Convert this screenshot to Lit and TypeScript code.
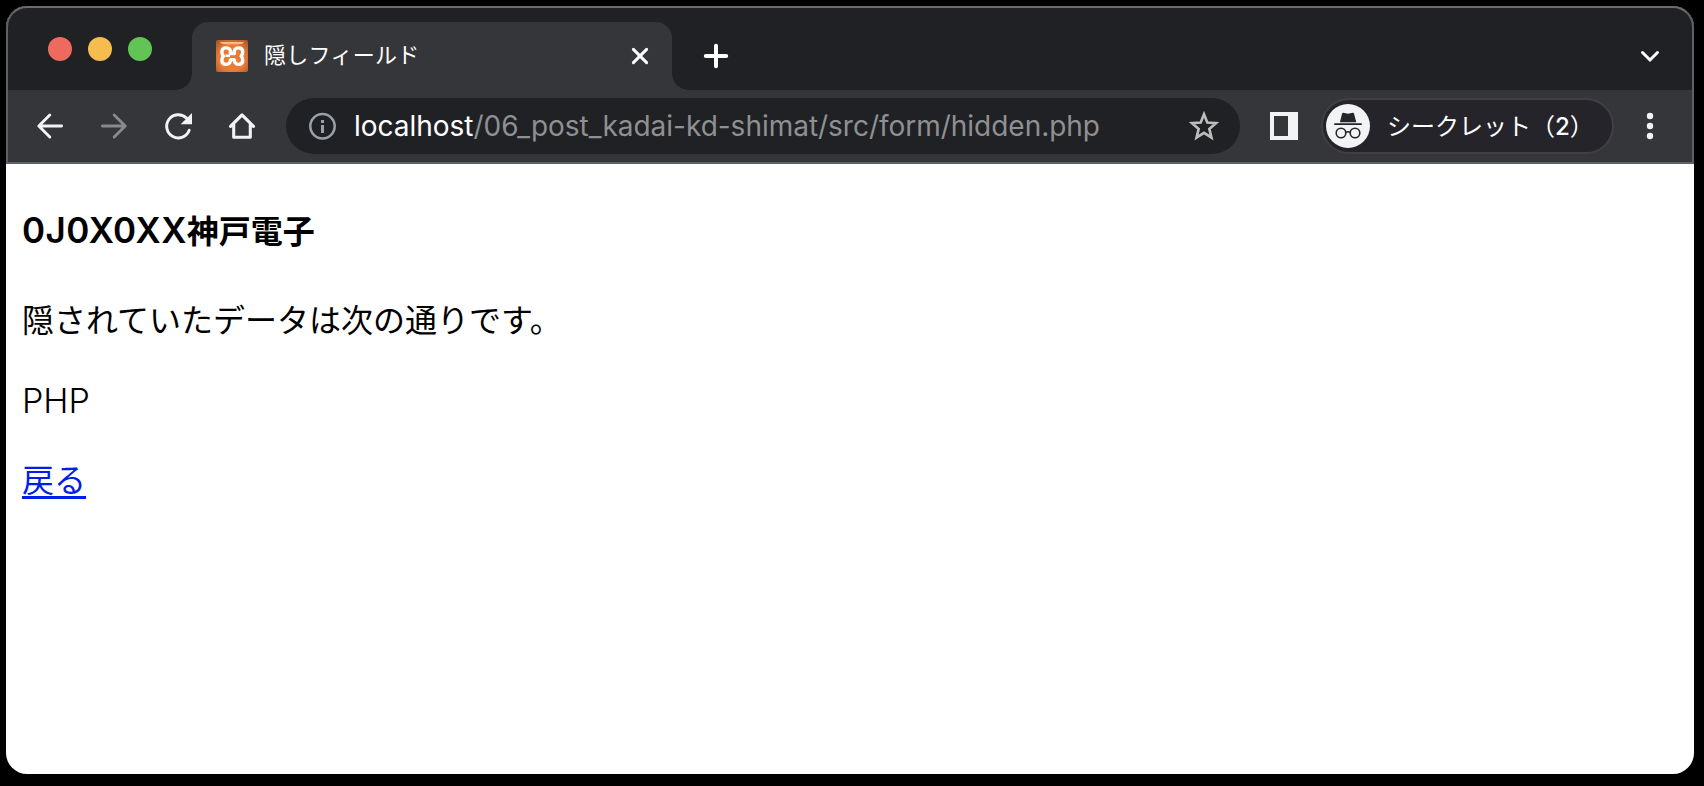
import { LitElement, html, css, svg } from "lit";
import { customElement } from "lit/decorators.js";

const icon = (body: unknown, size = 32) =>
  html`<svg class="icon" width=${size} height=${size} viewBox="0 0 ${size} ${size}" fill="none">${body}</svg>`;

const icons = {
  back: svg`<path d="M27.6 16H5.6M15.8 5 4.8 16l11 11" stroke="#f1f3f4" stroke-width="2.9" stroke-linecap="round" stroke-linejoin="round"/>`,
  forward: svg`<path d="M4.4 16h22M16.2 5l11 11-11 11" stroke="#88898b" stroke-width="2.9" stroke-linecap="round" stroke-linejoin="round"/>`,
  reload: svg`<path d="M27.2 20.2A11.6 11.6 0 1 1 24.3 7.9" stroke="#f1f3f4" stroke-width="2.9" stroke-linecap="round"/><path d="M30 3v11.3H18.7z" fill="#f1f3f4"/>`,
  home: svg`<path d="M4.5 16.3 16 4.8l11.5 11.5M7.7 14v13.3h16.6V14" stroke="#f1f3f4" stroke-width="3.1" stroke-linecap="round" stroke-linejoin="round"/>`,
  info: svg`<circle cx="16.5" cy="16.3" r="12.2" stroke="#9aa0a6" stroke-width="2.5"/><path d="M15 10h3v3h-3zM15 15h3v8h-3z" fill="#9aa0a6"/>`,
  star: svg`<path d="m16 4.2 3.3 8.4 8.7.6-6.7 5.7 2.2 8.7-7.5-4.8-7.5 4.8 2.2-8.7L4 13.2l8.7-.6z" stroke="#bdbdbe" stroke-width="2.6"/>`,
  panel: svg`<path d="M0 0h28v28H0z" fill="#f1f3f4"/><path d="M4 4h14v20H4z" fill="#35363a"/>`,
  close: svg`<path d="m9.4 9.4 13.2 13.2M22.6 9.4 9.4 22.6" stroke="#fff" stroke-width="3" stroke-linecap="round"/>`,
  plus: svg`<path d="M16 5.8v20.4M5.8 16h20.4" stroke="#fff" stroke-width="4" stroke-linecap="round"/>`,
  chevron: svg`<path d="m8.5 12.5 7.5 7.5 7.5-7.5" stroke="#fff" stroke-width="3" stroke-linecap="round"/>`,
  dots: svg`<g fill="#f1f3f4"><circle cx="16" cy="6" r="3.2"/><circle cx="16" cy="16" r="3.2"/><circle cx="16" cy="26" r="3.2"/></g>`,
  incognito: svg`<circle cx="22" cy="22" r="22" fill="#f1f3f4"/><path d="m17.3 8.7 4.7 1.1 4.7-1.1q.9-.2 1.3.8l2.3 8.7H13.9l2.2-8.7q.3-1 1.2-.8zM8.3 19.2h27.4v1.9H8.3z" fill="#25262a"/><g stroke="#25262a" stroke-width="1.6"><circle cx="15" cy="29" r="4.8"/><circle cx="29" cy="29" r="4.8"/><path d="M19.6 28.6q2.4-1.6 4.8 0"/></g>`,
  xampp: svg`<defs><radialGradient id="fav" cx="50%" cy="56%" r="70%"><stop offset=".6" stop-color="#e87b36"/><stop offset="1" stop-color="#a9572b"/></radialGradient></defs><rect width="32" height="32" rx="2" fill="url(#fav)"/><path d="M4 2h24q-1 2.2-6 2.2H10Q5 4.2 4 2z" fill="#f3b98f"/><path d="M14.4 13.6q.8-5.7-4.2-5.7-4.3 0-4.3 4 0 2.7 1.6 4.2-1.6 1.5-1.6 4.2 0 4.1 4.3 4.1 4.4 0 4.4-4.8h3.6q0 4.8 4.4 4.8 4.1 0 4.1-4.1 0-2.7-1.6-4.2 1.6-1.5 1.6-4.2 0-4-4.1-4-5 0-4.2 5.7z" stroke="#fff" stroke-width="3.4" stroke-linejoin="round"/><path d="M9.5 15.8h4.5" stroke="#fff" stroke-width="2.4"/>`,
};

@customElement("app-root")
export class AppRoot extends LitElement {
  static styles = css`
    :host {
      display: block;
      height: 786px;
      box-sizing: border-box;
      padding: 6px 10px 12px 6px;
      background: #000;
      overflow: hidden;
      font-family: Inter, "Noto Sans CJK JP", sans-serif;
    }
    .window {
      height: 768px;
      background: #fff;
      border-radius: 21px;
      overflow: hidden;
    }
    .chrome { position: relative; }
    .chrome::after {
      content: "";
      position: absolute;
      inset: 0;
      border: 2px solid #5f6063;
      border-top-color: #6b6c6e;
      border-radius: 21px 21px 0 0;
      pointer-events: none;
    }
    .icon { display: block; flex: none; }
    .strip {
      display: flex;
      height: 84px;
      background: #202124;
    }
    .lights {
      display: flex;
      gap: 16px;
      padding: 31px 0 0 42px;
      width: 144px;
    }
    .light { width: 24px; height: 24px; border-radius: 50%; }
    .red { background: #ee6a5f; }
    .yellow { background: #f5bd4f; }
    .green { background: #61c454; }
    .tab {
      position: relative;
      display: flex;
      box-sizing: border-box;
      width: 480px;
      height: 68px;
      margin-top: 16px;
      padding: 18px 16px 0 24px;
      background: #35363a;
      border-radius: 16px 16px 0 0;
    }
    .tab::before, .tab::after {
      content: "";
      position: absolute;
      bottom: 0;
      width: 16px;
      height: 16px;
    }
    .tab::before { left: -16px; background: radial-gradient(circle at 0 0, transparent 15.5px, #35363a 16px); }
    .tab::after { right: -16px; background: radial-gradient(circle at 100% 0, transparent 15.5px, #35363a 16px); }
    .title {
      flex: 1;
      margin-left: 16px;
      color: #fff;
      font-size: 22px;
      line-height: 31px;
      letter-spacing: 0.3px;
    }
    .new { margin: 34px auto 0 28px; }
    .more { margin: 34px 28px 0 0; }
    .toolbar {
      display: flex;
      align-items: center;
      box-sizing: border-box;
      height: 74px;
      padding: 0 28px 2px;
      background: #35363a;
    }
    .nav { display: flex; gap: 32px; }
    .address {
      display: flex;
      align-items: center;
      box-sizing: border-box;
      width: 954px;
      height: 56px;
      margin-left: 28px;
      padding: 0 20px;
      border-radius: 28px;
      background: #202124;
    }
    .url {
      flex: 1;
      margin-left: 16px;
      color: #8f9092;
      font-size: 28px;
      line-height: 57px;
      letter-spacing: -0.02px;
      white-space: nowrap;
    }
    .host { color: #fff; }
    .panel { margin: 0 23px 0 30px; }
    .profile {
      display: flex;
      align-items: center;
      box-sizing: border-box;
      width: 293px;
      height: 56px;
      padding-left: 3px;
      border: 2px solid #3f3f44;
      border-radius: 28px;
      background: #25242a;
      color: #fff;
    }
    .label {
      margin-left: 17px;
      font: 400 24px/50px "Noto Sans CJK JP", sans-serif;
      white-space: nowrap;
    }
    .count { font-family: Inter, sans-serif; font-weight: 500; }
    .menu { margin-left: auto; display: flex; }
    .page {
      padding: 43px 16px;
      color: #000;
      font-size: 32px;
      line-height: 48px;
    }
    .heading {
      margin: 0 0 42px;
      height: 48px;
      font-size: 35px;
      font-weight: 600;
      line-height: 46px;
      letter-spacing: 0.5px;
    }
    .heading .cjk { font-size: 32px; font-weight: 700; letter-spacing: 0; }
    .text { height: 48px; margin: 0 0 32px; }
    .latin { font-size: 34px; font-weight: 300; line-height: 48px; }
    .link {
      display: inline-block;
      box-sizing: border-box;
      height: 42px;
      color: #001ee8;
      text-decoration: none;
      border-bottom: 3px solid #001ee8;
    }
  `;

  render() {
    return html`
      <div class="window" lang="ja">
        <header class="chrome">
          <div class="strip">
            <div class="lights">
              <span class="light red"></span><span class="light yellow"></span><span class="light green"></span>
            </div>
            <div class="tab">
              ${icon(icons.xampp)}
              <span class="title">隠しフィールド</span>
              ${icon(icons.close)}
            </div>
            <span class="new">${icon(icons.plus)}</span>
            <span class="more">${icon(icons.chevron)}</span>
          </div>
          <div class="toolbar">
            <nav class="nav">${icon(icons.back)}${icon(icons.forward)}${icon(icons.reload)}${icon(icons.home)}</nav>
            <div class="address">
              ${icon(icons.info)}
              <span class="url"><span class="host">localhost</span>/06_post_kadai-kd-shimat/src/form/hidden.php</span>
              ${icon(icons.star)}
            </div>
            <span class="panel">${icon(icons.panel, 28)}</span>
            <div class="profile">${icon(icons.incognito, 44)}<span class="label">シークレット（<span class="count">2</span>）</span></div>
            <span class="menu">${icon(icons.dots)}</span>
          </div>
        </header>
        <main class="page">
          <h4 class="heading">0J0X0XX<span class="cjk">神戸電子</span></h4>
          <p class="text">隠されていたデータは次の通りです。</p>
          <p class="text latin">PHP</p>
          <a class="link" href="#">戻る</a>
        </main>
      </div>
    `;
  }
}
